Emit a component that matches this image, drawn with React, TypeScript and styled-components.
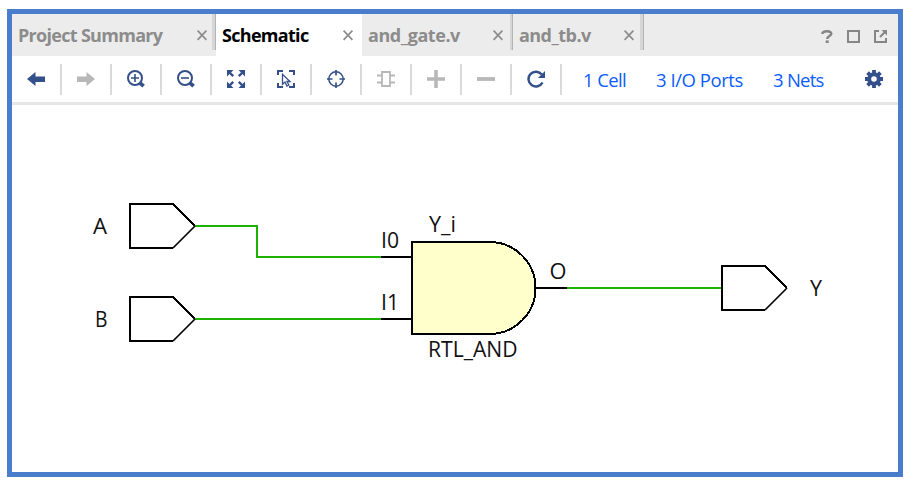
import React from "react";
import styled, { createGlobalStyle } from "styled-components";

const GlobalStyle = createGlobalStyle`
  * { box-sizing: border-box; }
  body {
    margin: 0;
    background: #fff;
    font-family: "Open Sans", "Noto Sans", sans-serif;
  }
`;

const Page = styled.div`
  height: 484px;
  padding: 9px 9px 7px 7px;
`;

const Frame = styled.main`
  display: flex;
  flex-direction: column;
  width: 896px;
  height: 468px;
  border: 5px solid #4a7dcc;
  background: #fff;
`;

const TabBar = styled.nav`
  display: flex;
  flex: none;
  height: 42px;
  background: #ececec;
`;

const Tab = styled.div<{ $width: number; $active?: boolean }>`
  display: flex;
  width: ${(p) => p.$width}px;
  padding-left: 6px;
  background: ${(p) => (p.$active ? "#fff" : "#ececec")};
  color: ${(p) => (p.$active ? "#000" : "#8c8c8c")};
`;

const TabLabel = styled.span<{ $spacing: number }>`
  flex: 1;
  font-size: 18px;
  font-weight: 700;
  line-height: 43px;
  letter-spacing: ${(p) => p.$spacing}px;
  white-space: nowrap;
`;

const CloseButton = styled.span<{ $gap: number }>`
  display: flex;
  flex: none;
  margin: 16px ${(p) => p.$gap}px 0 0;
  height: 11px;
`;

const TabDivider = styled.i<{ $width: number }>`
  flex: none;
  width: ${(p) => p.$width}px;
  height: 36px;
  background: #d6d6d6;
  border-right: 1px solid #b4b4b4;
`;

const WindowControls = styled.div`
  display: flex;
  align-items: flex-start;
  gap: 14px;
  margin-left: auto;
  padding: 16px 11px 0 0;
`;

const Toolbar = styled.div`
  display: flex;
  align-items: center;
  flex: none;
  height: 49px;
  border-bottom: 3px solid #e6e6e6;
`;

const Tool = styled.span<{ $muted?: boolean }>`
  display: flex;
  justify-content: center;
  align-items: center;
  width: 50px;
  height: 31px;
  border-right: 2px solid #dadada;
  color: ${(p) => (p.$muted ? "#b8b8b8" : "#34508a")};
`;

const Links = styled.div`
  display: flex;
  padding: 1px 0 0 21px;
`;

const StatLink = styled.a<{ $width: number; $spacing: number }>`
  width: ${(p) => p.$width}px;
  color: #0a5cff;
  font-size: 18.5px;
  line-height: 26px;
  letter-spacing: ${(p) => p.$spacing}px;
  white-space: nowrap;
`;

const Settings = styled.span`
  display: flex;
  margin: 0 15px 0 auto;
  color: #34508a;
`;

const Canvas = styled.svg`
  display: block;
  flex: none;
  width: 886px;
  height: 367px;
  font-size: 21px;
`;

const Icon = ({ children, size = 18 }: { children: React.ReactNode; size?: number }) => (
  <svg width={size} height={size} viewBox={`0 0 ${size} ${size}`} fill="none" stroke="currentColor" strokeWidth={2}>
    {children}
  </svg>
);

const arrow = "M0 9 8.5 2V6.5H18V12H8.5V16Z";

const tools: { name: string; muted?: boolean; art: React.ReactNode }[] = [
  { name: "back", art: <path d={arrow} fill="currentColor" stroke="none" /> },
  { name: "forward", muted: true, art: <path d={arrow} transform="matrix(-1 0 0 1 18 0)" fill="currentColor" stroke="none" /> },
  {
    name: "zoom-in",
    art: (
      <>
        <circle cx="8" cy="8" r="7" />
        <path d="M4 8H12M8 4V12" strokeWidth="1.6" />
        <path d="M12.8 12.8 16.6 16.2" strokeWidth="3.8" />
      </>
    ),
  },
  {
    name: "zoom-out",
    art: (
      <>
        <circle cx="8" cy="8" r="7" />
        <path d="M4 8H12" strokeWidth="1.6" />
        <path d="M12.8 12.8 16.6 16.2" strokeWidth="3.8" />
      </>
    ),
  },
  {
    name: "fit",
    art: (
      <>
        <path d="M0 0H6.5L0 6.5ZM18 0V6.5L11.5 0ZM0 18V11.5L6.5 18ZM18 18H11.5L18 11.5Z" fill="currentColor" stroke="none" />
        <path d="M2 2 6.2 6.2M16 2 11.8 6.2M2 16 6.2 11.8M16 16 11.8 11.8" strokeWidth="2.4" />
      </>
    ),
  },
  {
    name: "select-area",
    art: (
      <>
        <path d="M1 5V1H6M12 1H17V5M17 13V17H12M6 17H1V13" />
        <path d="M5.5 4.2V14.2L8 12 10 16 11.8 15 10 11.5H13Z" strokeWidth="1.3" />
      </>
    ),
  },
  {
    name: "target",
    art: (
      <>
        <circle cx="9" cy="9" r="7.2" strokeWidth="1.5" />
        <path d="M9 0V5.5M9 12.5V18M0 9H5.5M12.5 9H18" strokeWidth="1.7" />
      </>
    ),
  },
  {
    name: "cell",
    muted: true,
    art: <path d="M5 2H13V16H5ZM0 5.5H5M0 12.5H5M13 5.5H18M13 12.5H18" strokeWidth="1.8" />,
  },
  { name: "add", muted: true, art: <path d="M0 9H18M9 0V18" strokeWidth="3.6" /> },
  { name: "remove", muted: true, art: <path d="M0 9H18" strokeWidth="3.8" /> },
  {
    name: "reload",
    art: (
      <>
        <path d="M15.5 12.5A7.4 7.4 0 1 1 14.8 4.6" strokeWidth="2.5" />
        <path d="M18 1V8H11Z" fill="currentColor" stroke="none" />
      </>
    ),
  },
];

const tabs = [
  { label: "Project Summary", width: 204, gap: 5, divider: 4, spacing: -0.7 },
  { label: "Schematic", width: 146, gap: 9, divider: 0, spacing: -0.7, active: true },
  { label: "and_gate.v", width: 151, gap: 7, divider: 3, spacing: -0.45 },
  { label: "and_tb.v", width: 131, gap: 6, divider: 4, spacing: -0.55 },
];

const links = [
  { label: "1 Cell", width: 73, spacing: -0.6 },
  { label: "3 I/O Ports", width: 117, spacing: -0.45 },
  { label: "3 Nets", width: 60, spacing: -0.75 },
];

const Port = ({ x, y }: { x: number; y: number }) => (
  <g transform={`translate(${x} ${y})`} fill="none" stroke="#000">
    <path d="M43 44H0V0H43L65 22" strokeWidth="2" />
    <path d="M65 22 43 44" strokeWidth="1.7" shapeRendering="auto" />
  </g>
);

const labels = [
  { text: "A", x: 93, y: 234, width: 14 },
  { text: "B", x: 95, y: 327, width: 12.5 },
  { text: "I0", x: 381, y: 248, width: 18 },
  { text: "I1", x: 381, y: 310, width: 18 },
  { text: "Y_i", x: 429, y: 232, width: 27 },
  { text: "RTL_AND", x: 428, y: 357, width: 89.5 },
  { text: "O", x: 549.5, y: 279, width: 17 },
  { text: "Y", x: 810, y: 296, width: 12 },
];

export default function App() {
  return (
    <Page>
      <GlobalStyle />
      <Frame>
        <TabBar>
          {tabs.map((t) => (
            <Tab key={t.label} $width={t.width} $active={t.active}>
              <TabLabel $spacing={t.spacing}>{t.label}</TabLabel>
              <CloseButton $gap={t.gap}>
                <svg width="10" height="11" viewBox="0 0 10 11" stroke="#8c8c8c" strokeWidth="1.7">
                  <path d="M.6 .6 9.4 9.8M9.4 .6 .6 9.8" />
                </svg>
              </CloseButton>
              {t.divider > 0 && <TabDivider $width={t.divider} />}
            </Tab>
          ))}
          <WindowControls>
            <svg width="12" height="13" viewBox="0 0 12 13" fill="none" stroke="#868686" strokeWidth="2.5">
              <path d="M1.3 4C1.5 .4 10.3 .2 10.3 3.7C10.3 6.2 6.2 5.8 6.2 9" />
              <path d="M6.2 10.4V13" strokeWidth="3" />
            </svg>
            <svg width="13" height="13" viewBox="0 0 13 13" fill="none" stroke="#868686" strokeWidth="2">
              <path d="M1 1H12V12H1Z" />
            </svg>
            <svg width="13" height="13" viewBox="0 0 13 13" fill="none" stroke="#868686" strokeWidth="2">
              <path d="M5 1H1V12H12V8M6 7 11 2" />
              <path d="M7.5 0H13V5.5Z" fill="#868686" stroke="none" />
            </svg>
          </WindowControls>
        </TabBar>
        <Toolbar>
          {tools.map((t) => (
            <Tool key={t.name} $muted={t.muted}>
              <Icon>{t.art}</Icon>
            </Tool>
          ))}
          <Links>
            {links.map((l) => (
              <StatLink key={l.label} $width={l.width} $spacing={l.spacing}>
                {l.label}
              </StatLink>
            ))}
          </Links>
          <Settings>
            <Icon>
              <circle cx="9" cy="9" r="4.8" strokeWidth="4" />
              <path
                d="M9 0V3M9 15V18M0 9H3M15 9H18M2.6 2.6 4.8 4.8M13.2 13.2 15.4 15.4M2.6 15.4 4.8 13.2M13.2 4.8 15.4 2.6"
                strokeWidth="3.8"
              />
            </Icon>
          </Settings>
        </Toolbar>
        <Canvas viewBox="12 105 886 367">
          <g shapeRendering="crispEdges">
            <g fill="none" stroke="#1db100" strokeWidth="2">
              <path d="M195 226H257V257H381M195 319H381M567 288H721" />
            </g>
            <Port x={130} y={204} />
            <Port x={130} y={297} />
            <Port x={722} y={266} />
            <g stroke="#000" strokeWidth="2">
              <path d="M412 242H489.5A46 46 0 0 1 489.5 334H412Z" fill="#ffffcc" />
              <path d="M381 257H411M381 319H411M536 288H567" />
            </g>
          </g>
          <g fill="#111">
            {labels.map((l) => (
              <text key={l.text} x={l.x} y={l.y} textLength={l.width} lengthAdjust="spacingAndGlyphs">
                {l.text}
              </text>
            ))}
          </g>
        </Canvas>
      </Frame>
    </Page>
  );
}
